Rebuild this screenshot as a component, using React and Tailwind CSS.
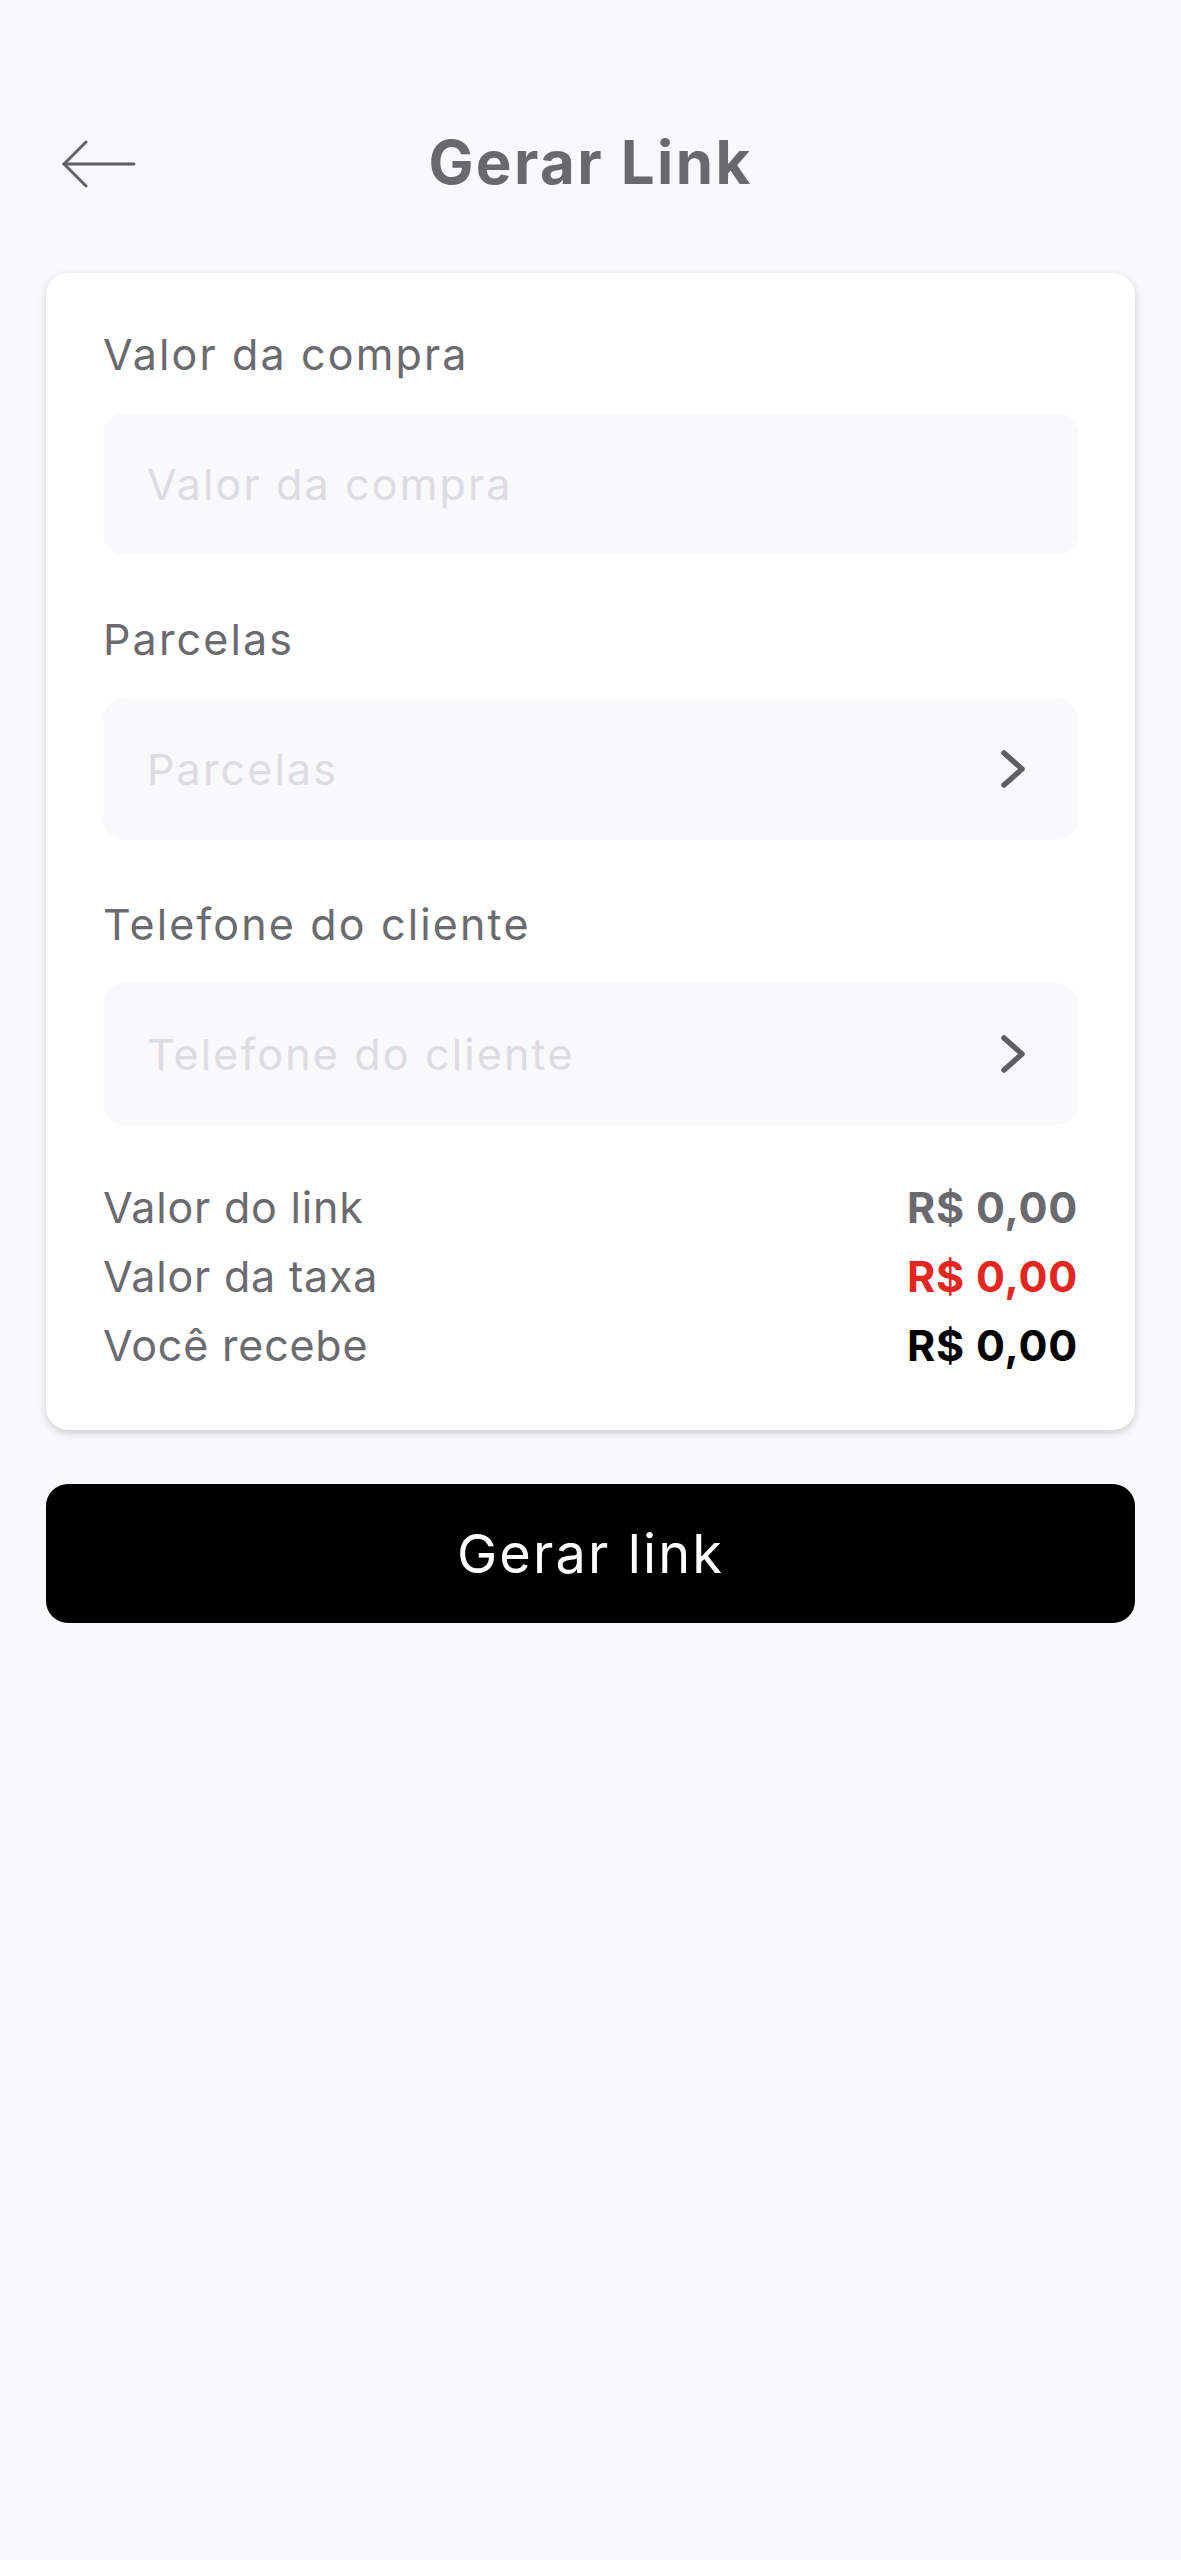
const font = { fontFamily: 'Inter, "Noto Sans", sans-serif' }

function Chevron() {
  return (
    <svg width="30" height="42" viewBox="0 0 30 42" fill="none" stroke="#5f5f63" strokeWidth="5.5" strokeLinecap="round" strokeLinejoin="round">
      <path d="M6 5 L24 21 L6 37" />
    </svg>
  )
}

function Field({ label, placeholder, select = false }) {
  return (
    <div className="flex flex-col">
      <label className="text-[43px] leading-[48px] tracking-[0.05em] text-[#6b6b6f]">{label}</label>
      <div className="mt-[35px] h-[142px] rounded-[22px] bg-[#f9f8fb] flex items-center pl-[44px] pr-[50px]">
        <span className="flex-1 text-[43px] tracking-[0.05em] text-[#dddce1]">{placeholder}</span>
        {select && <Chevron />}
      </div>
    </div>
  )
}

function Row({ label, value, color }) {
  return (
    <div className="flex items-center justify-between h-[69px] tracking-[0.05em]">
      <span className="text-[43px] text-[#6b6b6f]">{label}</span>
      <span className={`text-[43px] font-bold ${color}`}>{value}</span>
    </div>
  )
}

export default function App() {
  return (
    <div className="min-h-[2560px] bg-[#f9f8fb] px-[46px]" style={font}>
      {/* header */}
      <div className="relative h-[273px] flex justify-center pt-[126px]">
        <button className="absolute left-[16px] top-[140px] text-[#5f5f63]">
          <svg width="74" height="48" viewBox="0 0 74 48" fill="none" stroke="currentColor" strokeWidth="3" strokeLinecap="round">
            <path d="M2 24 H72" />
            <path d="M24 2 L2 24 L24 46" />
          </svg>
        </button>
        <h1 className="text-[60px] leading-[72px] font-bold tracking-[0.04em] text-[#69696d]">Gerar Link</h1>
      </div>

      {/* form card */}
      <div className="bg-white rounded-[22px] shadow-[0_3px_8px_rgba(0,0,0,0.18)] px-[57px] pt-[57px] pb-[50px]">
        <div className="flex flex-col gap-[60px]">
          <Field label="Valor da compra" placeholder="Valor da compra" />
          <Field label="Parcelas" placeholder="Parcelas" select />
          <Field label="Telefone do cliente" placeholder="Telefone do cliente" select />
        </div>
        <div className="mt-[48px]">
          <Row label="Valor do link" value="R$ 0,00" color="text-[#6a6a6e]" />
          <Row label="Valor da taxa" value="R$ 0,00" color="text-[#e3261f]" />
          <Row label="Você recebe" value="R$ 0,00" color="text-black" />
        </div>
      </div>

      <button className="mt-[54px] w-full h-[139px] rounded-[22px] bg-black text-white text-[54px] tracking-[0.04em]">
        Gerar link
      </button>
    </div>
  )
}
